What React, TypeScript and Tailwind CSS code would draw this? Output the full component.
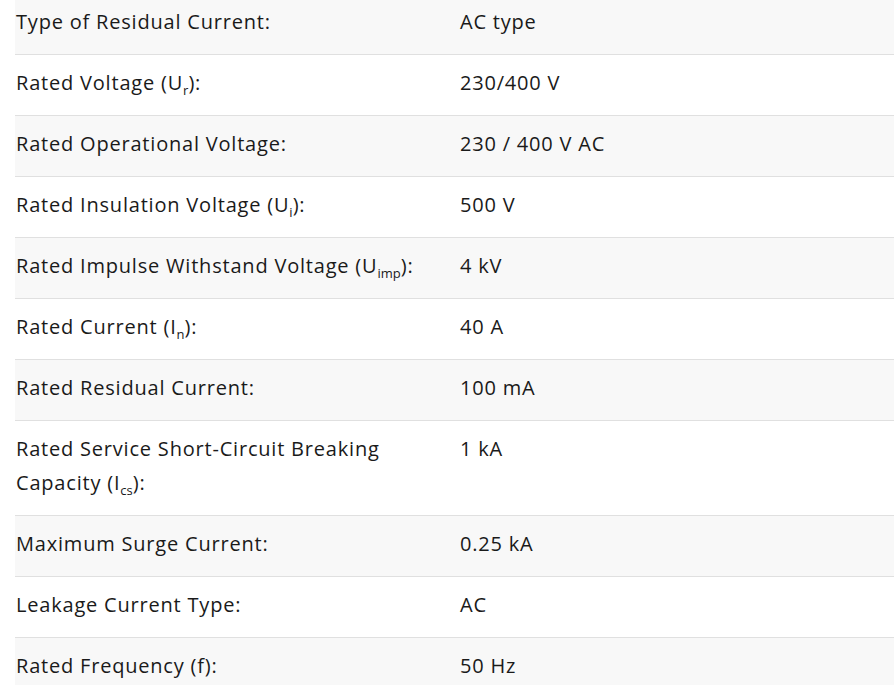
import React from "react";

type Row = { label: React.ReactNode; value: string };

const S = ({ children }: { children: React.ReactNode }) => (
  <sub className="text-[13px] leading-none align-[-2px] tracking-normal">{children}</sub>
);

const rows: Row[] = [
  { label: "Type of Residual Current:", value: "AC type" },
  { label: <>Rated Voltage (U<S>r</S>):</>, value: "230/400 V" },
  { label: "Rated Operational Voltage:", value: "230 / 400 V AC" },
  { label: <>Rated Insulation Voltage (U<S>i</S>):</>, value: "500 V" },
  { label: <>Rated Impulse Withstand Voltage (U<S>imp</S>):</>, value: "4 kV" },
  { label: <>Rated Current (I<S>n</S>):</>, value: "40 A" },
  { label: "Rated Residual Current:", value: "100 mA" },
  { label: <>Rated Service Short-Circuit Breaking Capacity (I<S>cs</S>):</>, value: "1 kA" },
  { label: "Maximum Surge Current:", value: "0.25 kA" },
  { label: "Leakage Current Type:", value: "AC" },
  { label: "Rated Frequency (f):", value: "50 Hz" },
];

export default function App() {
  return (
    <div
      className="w-[894px] h-[685px] overflow-hidden bg-white text-[#1a1a1a]"
      style={{ fontFamily: '"Open Sans", sans-serif' }}
    >
      <div className="ml-[15px] mt-[-6px]">
        {rows.map((r, i) => (
          <div
            key={i}
            className={`flex border-b border-[#e0e0e0] pt-[11px] pb-[15px] text-[20px] leading-[34px] tracking-[0.8px] ${
              i % 2 === 0 ? "bg-[#f8f8f8]" : "bg-white"
            }`}
          >
            <div className="w-[445px] shrink-0 pl-px pr-[40px]">{r.label}</div>
            <div className="flex-1">{r.value}</div>
          </div>
        ))}
      </div>
    </div>
  );
}
